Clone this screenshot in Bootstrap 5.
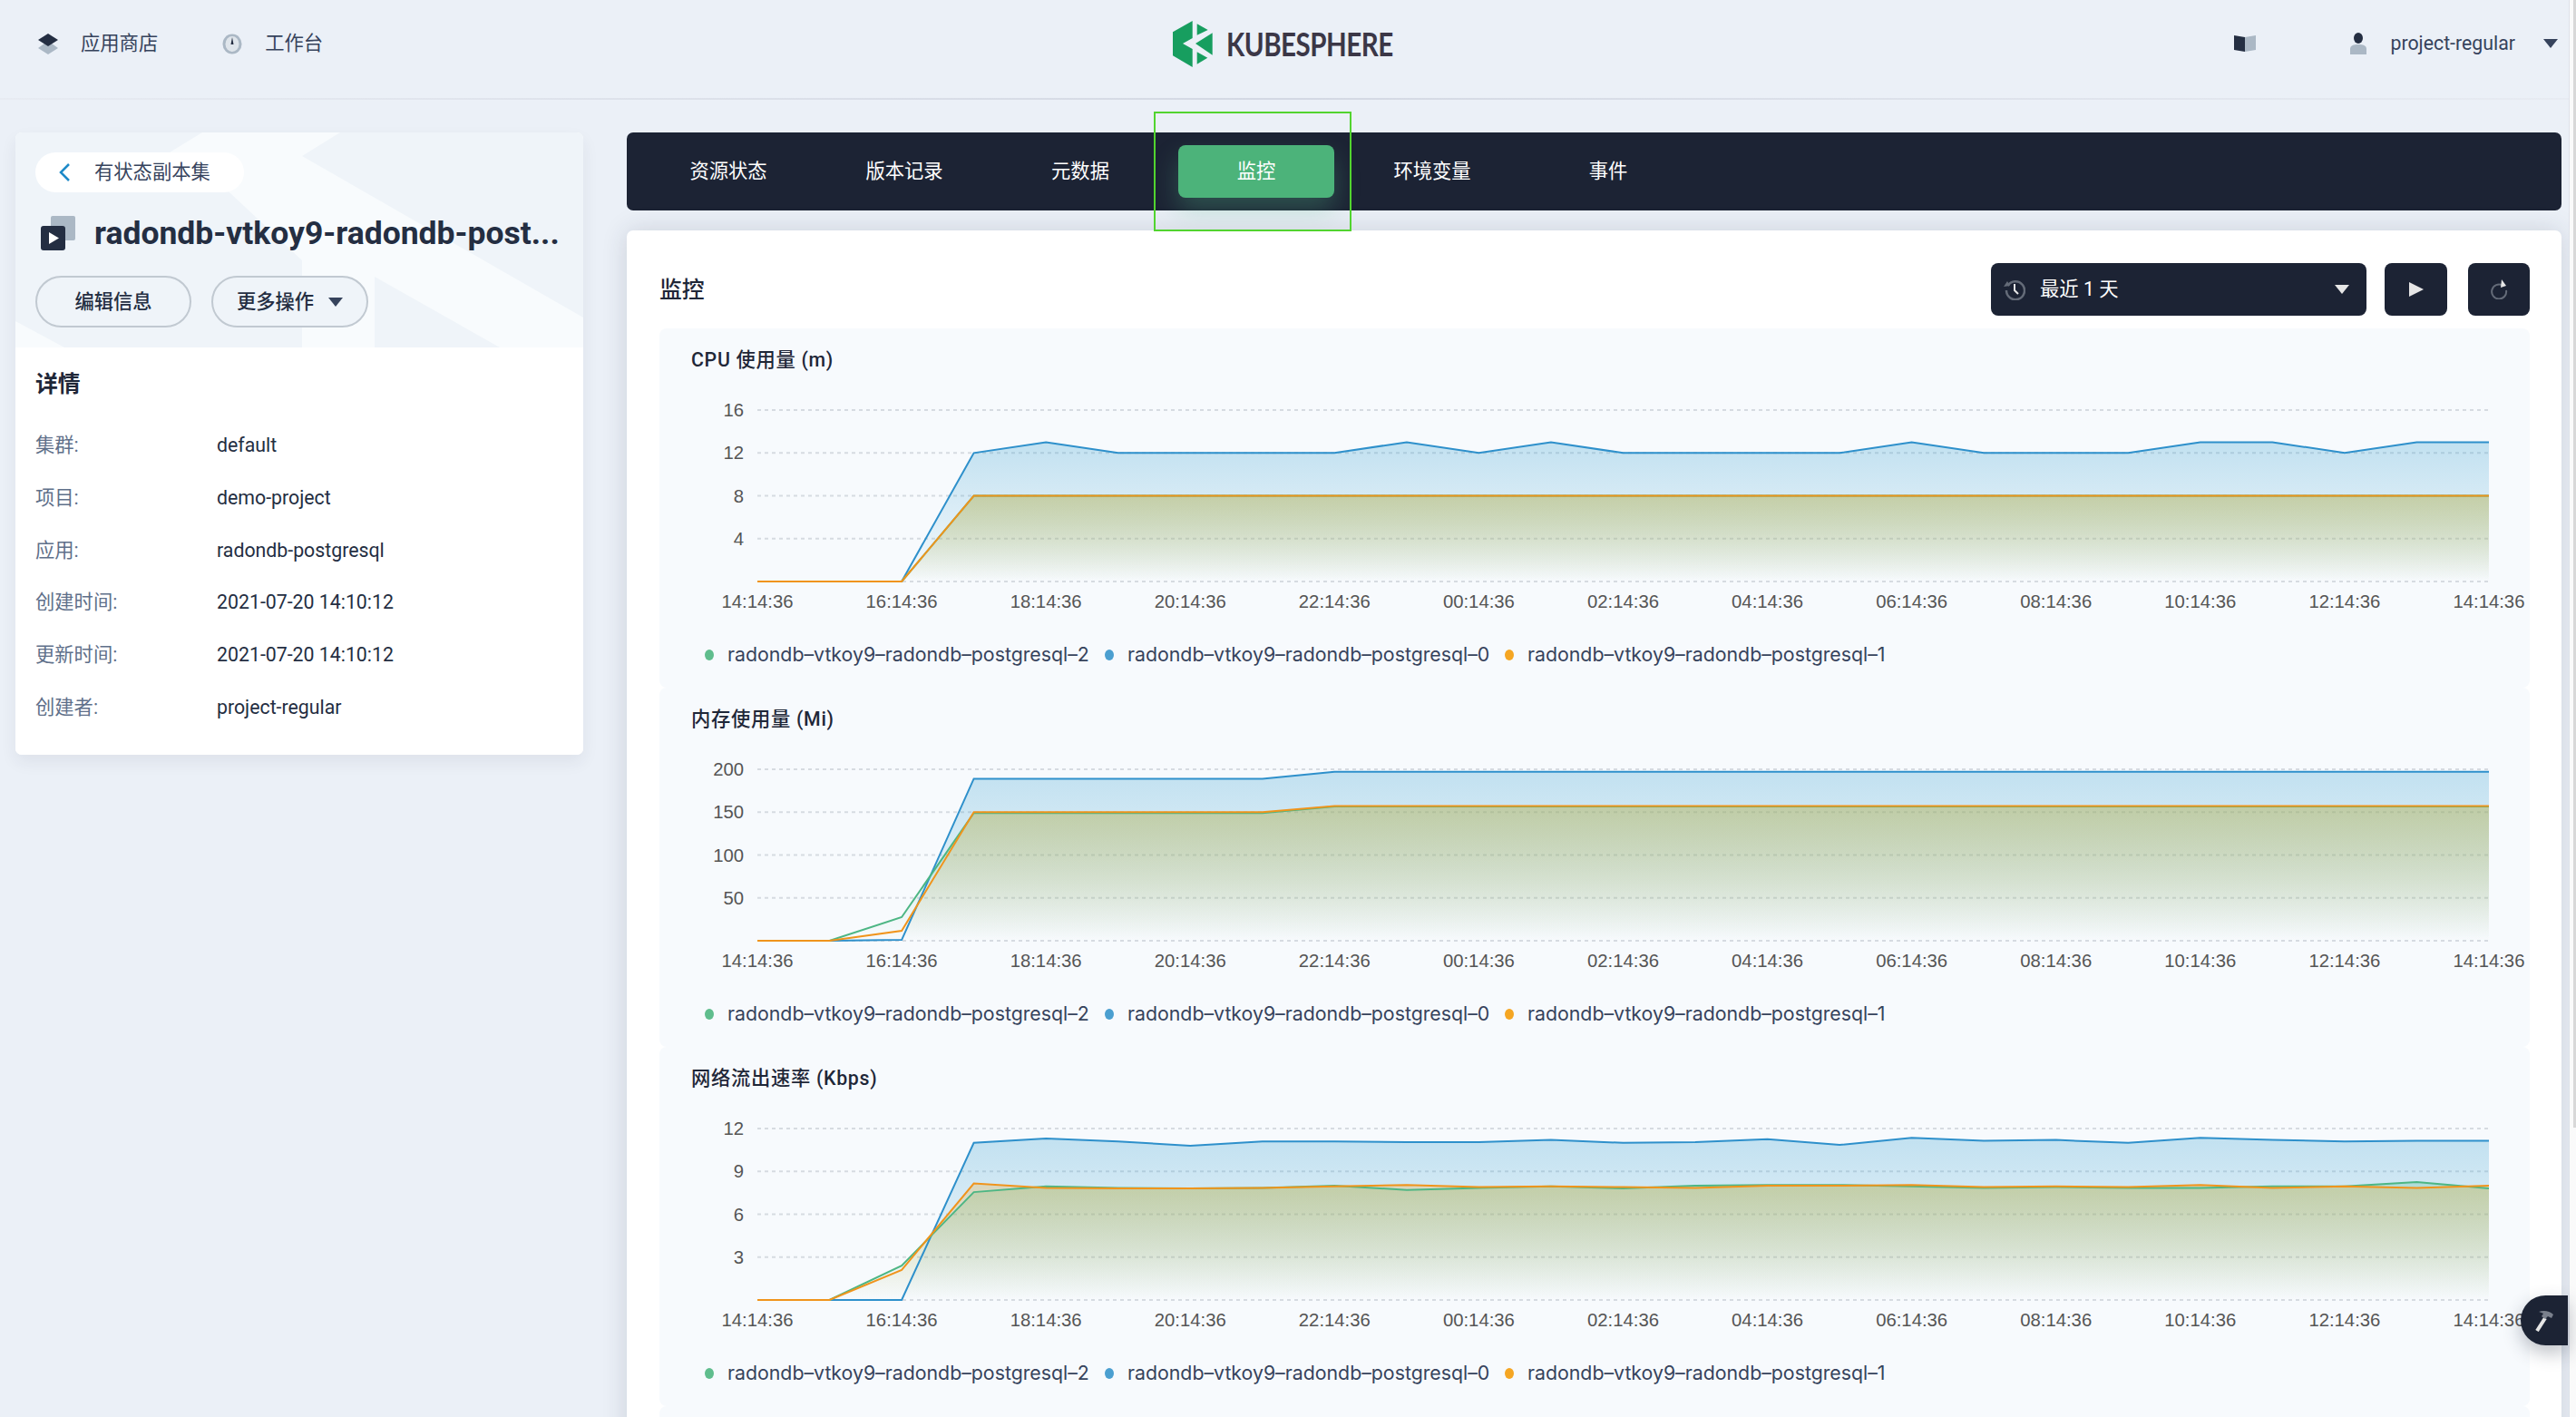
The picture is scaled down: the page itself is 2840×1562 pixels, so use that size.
<!DOCTYPE html>
<html lang="zh">
<head>
    <meta charset="UTF-8">
    <meta name="viewport" content="width=device-width, initial-scale=1.0">
    <title>KubeSphere 监控</title>
    <link href="https://cdn.jsdelivr.net/npm/bootstrap@5.3.0/dist/css/bootstrap.min.css" rel="stylesheet">
    <style>
        html, body { height: 100%; overflow: hidden; }
        body { background: #ebf0f7; color: #242e42; font-family: Roboto, "Noto Sans CJK SC", sans-serif; font-size: 21.3px; }
        .page-wrap { width: 2832px; height: 1562px; overflow: hidden; }
        .gutter { width: 8px; background: #fafafa; border-left: 1px solid #dde1e9; }
        .gutter-thumb { width: 3px; height: 1243px; background: #d8d8d8; }

        .top-bar { height: 108px; padding: 0 12px 12px 42px; display: grid; grid-template-columns: 1fr auto 1fr; align-items: center; }
        .top-rule { height: 2px; background: linear-gradient(to right, #e7ebf2, #d3d8e3 50%, #e7ebf2); }
        .top-item { color: #36435c; gap: 25px; }
        .top-item svg { flex: none; }
        .top-user { margin-left: 27px; }
        .logo-box { gap: 15px; margin-right: 34px; }
        .logo-text { font-family: Lato, sans-serif; font-size: 36px; font-weight: 700; color: #3b3747; letter-spacing: -.6px; line-height: 1; width: 183px; white-space: nowrap; transform: scaleX(.82); transform-origin: left center; }
        .caret-dark { width: 0; height: 0; border-left: 8.5px solid transparent; border-right: 8.5px solid transparent; border-top: 10px solid #36435c; }

        .side-col { width: 626px; margin-left: 17px; margin-top: 36px; flex: none; align-self: flex-start; }
        .side-card { border: 0; border-radius: 7px; overflow: hidden; box-shadow: 0 8px 18px rgba(36,46,66,.07); }
        .side-head { position: relative; height: 237px; padding: 22px; background: #eff4f9; }
        .side-deco { position: absolute; left: 0; top: 0; }
        .side-head > div { position: relative; }
        .back-pill { width: 230px; height: 44px; border-radius: 22px; background: #fff; padding-left: 26px; color: #36435c; gap: 26px; }
        .res-title { margin-top: 24px; height: 42px; font-size: 35.5px; font-weight: 700; line-height: 42px; white-space: nowrap; }
        .res-title svg { margin-left: 6px; margin-right: 21px; flex: none; }
        .btn-round { height: 57px; border-radius: 29px; background: #eff4f9; border: 2px solid #c1c9d1; color: #242e42; font-size: 21.3px; font-weight: 500; padding: 0; }
        .btn-edit { width: 172px; }
        .btn-more { width: 173px; gap: 16px; }
        .side-body { padding: 26px 22px 23px; background: #fff; }
        .side-title { font-size: 24.85px; font-weight: 700; line-height: 30px; margin-bottom: 23px; color: #1f2738; }
        .info-row { height: 57.8px; }
        .info-key { width: 200px; color: #5f708a; }

        .main-col { margin: 36px 8px 0 48px; min-width: 0; flex: 1; }
        .tab-strip { height: 86px; background: #1c2334; border-radius: 7px; padding: 14px 26px; gap: 22px; }
        .tab-strip .nav-link { width: 172px; height: 58px; padding: 0; border-radius: 8px; color: #fff; display: flex; align-items: center; justify-content: center; }
        .tab-strip .nav-link.active { background: #4cb37a; color: #fff; box-shadow: 0 14px 28px rgba(85,188,138,.3); }
        .mark-box { position: absolute; left: -27px; top: -37px; width: 218px; height: 132px; border: 2px solid #52d42f; pointer-events: none; }

        .monitor-card { margin-top: 22px; background: #fff; border-radius: 7px; border: 0; padding: 36px 35px 0 36px; box-shadow: 0 0 28px rgba(36,46,66,.16); }
        .monitor-title { font-size: 24.85px; font-weight: 500; color: #1f2738; padding-top: 2px; }
        .dark-btn { background: #1c2334; border: 0; border-radius: 8px; height: 58px; padding: 0; }
        .dark-btn:hover { background: #1c2334; }
        .time-pick { width: 414px; color: #fff; font-size: 21.3px; padding: 0 19px 0 14px; gap: 16px; }
        .caret-light { width: 0; height: 0; border-left: 8px solid transparent; border-right: 8px solid transparent; border-top: 10px solid #e6e6e6; }
        .play-btn { width: 69px; margin-left: 20px; }
        .reload-btn { width: 68px; margin-left: 23px; }

        .chart-panel { height: 396px; margin-top: 0; padding-top: 22px; background: #f7fafd; border-radius: 8px; }
        .chart-stack { margin-top: 14px; }
        .chart-name { padding-left: 35px; line-height: 26px; height: 26px; font-weight: 500; color: #1f2738; letter-spacing: .7px; }
        .chart-svg { display: block; margin-top: 10px; overflow: visible; }
        .tick { font-family: "Liberation Sans", sans-serif; font-size: 20.3px; fill: #555; }
        .legend-row { margin-top: 19px; padding-left: 50px; height: 26px; font-family: Inter, sans-serif; font-size: 21.3px; color: #36435c; }
        .legend-dot { width: 10px; height: 12px; border-radius: 50%; margin-right: 15px; flex: none; }
        .legend-name { width: 400px; margin-right: 16px; white-space: nowrap; }

        .tool-tab { position: absolute; left: 2779px; top: 1428px; width: 52px; height: 55px; background: #1c2334; border-radius: 28px 0 0 28px; box-shadow: 0 8px 20px rgba(36,46,66,.3); }
    </style>
</head>
<body class="d-flex">
<div class="page-wrap flex-grow-1">
    <header class="top-bar">
        <div class="d-flex align-items-center">
            <a class="top-item d-flex align-items-center text-decoration-none" href="#">
                <svg width="22" height="23" viewBox="0 0 22 23"><path fill="#abb8c5" d="M11 8 22 16 11 23 0 16z"/><path fill="#242e42" d="M11 0 22 7 11 14 0 7z"/></svg>
                <span>应用商店</span>
            </a>
            <a class="top-item d-flex align-items-center text-decoration-none" style="margin-left:71px" href="#">
                <svg width="22" height="23" viewBox="0 0 22 23"><ellipse cx="11" cy="11.500" rx="10.500" ry="11" fill="#abb8c5"/><ellipse cx="11" cy="11.500" rx="7.500" ry="8.500" fill="#dfe5eb"/><path fill="#242e42" d="M9.500 12 11 4 12.500 12z"/></svg>
                <span>工作台</span>
            </a>
        </div>
        <div class="logo-box d-flex align-items-center">
            <svg width="44" height="51" viewBox="0 0 44 51"><g fill="#179e5f"><path d="M21.700 0 0 12.300V38.300L21.700 51V31L11 25 21.700 19z"/><path d="M26.700 3.300 38.700 10 26.700 15.700z"/><path d="M26.700 34.300 38.300 40.700 26.700 47.700z"/><path d="M43.700 13.300V37.700L25 25z"/></g></svg>
            <span class="logo-text">KUBESPHERE</span>
        </div>
        <div class="d-flex align-items-center justify-content-end">
            <svg width="24" height="18" viewBox="0 0 24 18"><path fill="#242e42" d="M0 0 12 2V18L0 16z"/><path fill="#abb8c5" d="M12 2 24 0V16L12 18z"/></svg>
            <svg style="margin-left:104px" width="18" height="24" viewBox="0 0 18 24"><ellipse cx="9" cy="6" rx="5" ry="6" fill="#242e42"/><path fill="#abb8c5" d="M0 24V18C0 14 4 13 9 13S18 14 18 18V24z"/></svg>
            <span class="top-item top-user">project-regular</span>
            <span class="caret-dark" style="margin-left:31px"></span>
        </div>
    </header>
    <div class="top-rule"></div>

    <div class="d-flex">
        <aside class="side-col">
            <div class="card side-card">
                <div class="side-head">
                    <svg class="side-deco" width="626" height="237" viewBox="0 0 626 237"><g fill="#f8fbfd"><path d="M206 0H358L316 26 626 204V237H534L396 159V237H316V141L237 67 170 22z"/><path d="M0 208 54 237H0z"/></g></svg>
                    <div class="back-pill d-flex align-items-center">
                        <svg width="13" height="20" viewBox="0 0 13 20"><path d="M11 1 2 10 11 19" fill="none" stroke="#1e8ac8" stroke-width="2.500"/></svg>
                        <span>有状态副本集</span>
                    </div>
                    <div class="res-title d-flex align-items-center">
                        <svg width="38" height="38" viewBox="0 0 38 38"><rect x="11" y="0" width="27" height="27" rx="2" fill="#abb8c5"/><rect x="0" y="11" width="27" height="27" rx="3" fill="#242e42"/><path fill="#fff" d="M9 18 20 24.500 9 31z"/></svg>
                        <span>radondb-vtkoy9-radondb-post...</span>
                    </div>
                    <div class="d-flex" style="margin-top:26px;gap:22px">
                        <button type="button" class="btn btn-round btn-edit">编辑信息</button>
                        <button type="button" class="btn btn-round btn-more d-flex align-items-center justify-content-center">更多操作<span class="caret-dark"></span></button>
                    </div>
                </div>
                <div class="side-body">
                    <div class="side-title">详情</div>
                    <div class="info-row d-flex align-items-center"><span class="info-key">集群:</span><span>default</span></div>
                    <div class="info-row d-flex align-items-center"><span class="info-key">项目:</span><span>demo-project</span></div>
                    <div class="info-row d-flex align-items-center"><span class="info-key">应用:</span><span>radondb-postgresql</span></div>
                    <div class="info-row d-flex align-items-center"><span class="info-key">创建时间:</span><span>2021-07-20 14:10:12</span></div>
                    <div class="info-row d-flex align-items-center"><span class="info-key">更新时间:</span><span>2021-07-20 14:10:12</span></div>
                    <div class="info-row d-flex align-items-center"><span class="info-key">创建者:</span><span>project-regular</span></div>
                </div>
            </div>
        </aside>

        <main class="main-col">
            <ul class="nav tab-strip">
                <li class="nav-item"><a class="nav-link" href="#">资源状态</a></li>
                <li class="nav-item"><a class="nav-link" href="#">版本记录</a></li>
                <li class="nav-item"><a class="nav-link" href="#">元数据</a></li>
                <li class="nav-item position-relative"><a class="nav-link active" href="#">监控</a><div class="mark-box"></div></li>
                <li class="nav-item"><a class="nav-link" href="#">环境变量</a></li>
                <li class="nav-item"><a class="nav-link" href="#">事件</a></li>
            </ul>

            <section class="monitor-card">
                <div class="d-flex align-items-center">
                    <div class="monitor-title me-auto">监控</div>
                    <button type="button" class="btn dark-btn time-pick d-flex align-items-center">
                        <svg width="24" height="24" viewBox="0 0 24 24"><path d="M4.500 8A10 10 0 1 1 3 13" fill="none" stroke="#646b78" stroke-width="2.500"/><path fill="#646b78" d="M0 9 7 8 4 3z"/><path d="M12 6V13L16 17" fill="none" stroke="#e6e6e6" stroke-width="2"/></svg>
                        <span>最近 1 天</span>
                        <span class="caret-light ms-auto"></span>
                    </button>
                    <button type="button" class="btn dark-btn play-btn d-flex align-items-center justify-content-center">
                        <svg width="16" height="16" viewBox="0 0 16 16"><path fill="#e6e6e6" d="M0 0 16 8 0 16z"/></svg>
                    </button>
                    <button type="button" class="btn dark-btn reload-btn d-flex align-items-center justify-content-center">
                        <svg width="20" height="22" viewBox="0 0 20 22"><path d="M14 6.500A8 8 0 1 0 18 12" fill="none" stroke="#646b78" stroke-width="2"/><path fill="#e6e6e6" d="M12 9 13 0 18 7z"/></svg>
                    </button>
                </div>
                <div class="chart-stack" id="charts"></div>
            </section>
        </main>
    </div>
</div>
<div class="gutter"><div class="gutter-thumb ms-auto"></div></div>

<div class="tool-tab d-flex align-items-center justify-content-center">
    <svg width="22" height="24" viewBox="0 0 22 24"><path d="M12 9 3 23" stroke="#e6e6e6" stroke-width="4"/><path fill="#7a808c" d="M5 2C10 0 17 1 21 5L19 9 15 7 12 10 8 7 10 4C9 3 7 3 5 2z"/></svg>
</div>

<script>
    var names = ['radondb–vtkoy9–radondb–postgresql–2', 'radondb–vtkoy9–radondb–postgresql–0', 'radondb–vtkoy9–radondb–postgresql–1'];
    var colors = { green: '#4db684', blue: '#2e90cb', orange: '#f0941c' };
    var dots = ['#5fbd8d', '#4b9fd0', '#f5a623'];
    var times = ['14:14:36', '16:14:36', '18:14:36', '20:14:36', '22:14:36', '00:14:36', '02:14:36', '04:14:36', '06:14:36', '08:14:36', '10:14:36', '12:14:36', '14:14:36'];

    function rep(n, v) { return Array(n).fill(v); }

    var charts = [
        {
            title: 'CPU 使用量 (m)', ticks: [4, 8, 12, 16],
            blue: [0, 0, 0, 12, 13, 12, 12, 12, 12, 13, 12, 13, 12, 12, 12, 12, 13, 12, 12, 12, 13, 13, 12, 13, 13],
            green: [0, 0, 0].concat(rep(22, 8)),
            orange: [0, 0, 0].concat(rep(22, 8))
        },
        {
            title: '内存使用量 (Mi)', ticks: [50, 100, 150, 200],
            blue: [0, 0, 1].concat(rep(5, 189), rep(17, 197)),
            green: [0, 0, 27.5].concat(rep(5, 149), rep(17, 156.5)),
            orange: [0, 0, 11.5].concat(rep(5, 150), rep(17, 157))
        },
        {
            title: '网络流出速率 (Kbps)', ticks: [3, 6, 9, 12],
            blue: [0, 0, 0, 11, 11.3, 11.1, 10.8, 11.1, 11.1, 11.05, 11.05, 11.2, 11, 11.05, 11.25, 10.85, 11.35, 11.15, 11.2, 11, 11.35, 11.2, 11.1, 11.15, 11.15],
            green: [0, 0, 2.4, 7.55, 7.95, 7.85, 7.8, 7.85, 8, 7.7, 7.85, 7.95, 7.8, 8, 8.05, 8.05, 7.95, 7.85, 7.9, 7.85, 7.85, 7.95, 7.95, 8.25, 7.8],
            orange: [0, 0, 2.1, 8.15, 7.85, 7.8, 7.8, 7.85, 7.95, 8.05, 7.9, 7.95, 7.9, 7.85, 8, 8, 8.05, 7.9, 7.95, 7.9, 8.05, 7.85, 7.95, 7.85, 8]
        }
    ];

    var X0 = 108, STEP = 79.54, Y0 = 221, SPAN = 189;

    function buildChart(c, idx) {
        var top = c.ticks[c.ticks.length - 1];
        function yOf(v) { return Y0 - v / top * SPAN; }
        var svg = '<defs>';
        ['blue', 'green', 'orange'].forEach(function (k) {
            var base = k === 'blue' ? '#329dce' : k === 'green' ? '#55bc8a' : '#f5a623';
            svg += '<linearGradient id="g' + idx + k + '" x1="0" y1="0" x2="0" y2="1">' +
                '<stop offset="0" stop-color="' + base + '" stop-opacity=".27"/>' +
                '<stop offset=".55" stop-color="' + base + '" stop-opacity=".13"/>' +
                '<stop offset="1" stop-color="' + base + '" stop-opacity="0"/></linearGradient>';
        });
        svg += '</defs>';

        // grid and axis labels
        [0].concat(c.ticks).forEach(function (t) {
            var y = yOf(t);
            svg += '<line x1="' + X0 + '" x2="' + (X0 + STEP * 24) + '" y1="' + y + '" y2="' + y + '" stroke="#d6dbe1" stroke-width="2" stroke-dasharray="4 4"/>';
            if (t) svg += '<text class="tick" x="93" y="' + (y + 7) + '" text-anchor="end">' + t + '</text>';
        });
        times.forEach(function (t, i) {
            svg += '<text class="tick" x="' + (X0 + STEP * 2 * i) + '" y="250" text-anchor="middle">' + t + '</text>';
        });

        // areas first, then the lines on top
        ['blue', 'green', 'orange'].forEach(function (k) {
            var pts = c[k].map(function (v, i) { return (X0 + STEP * i).toFixed(1) + ',' + yOf(v).toFixed(1); });
            svg += '<polygon fill="url(#g' + idx + k + ')" points="' + X0 + ',' + Y0 + ' ' + pts.join(' ') + ' ' + (X0 + STEP * 24) + ',' + Y0 + '"/>';
        });
        ['blue', 'green', 'orange'].forEach(function (k) {
            var pts = c[k].map(function (v, i) { return (X0 + STEP * i).toFixed(1) + ',' + yOf(v).toFixed(1); });
            svg += '<polyline fill="none" stroke="' + colors[k] + '" stroke-width="2" points="' + pts.join(' ') + '"/>';
        });

        var legend = names.map(function (n, i) {
            return '<span class="legend-dot" style="background:' + dots[i] + '"></span><span class="legend-name">' + n + '</span>';
        }).join('');

        return '<div class="chart-panel">' +
            '<div class="chart-name">' + c.title + '</div>' +
            '<svg class="chart-svg" width="2062" height="270" viewBox="0 0 2062 270">' + svg + '</svg>' +
            '<div class="legend-row d-flex align-items-center">' + legend + '</div>' +
            '</div>';
    }

    document.getElementById('charts').innerHTML = charts.map(buildChart).join('') + '<div class="chart-panel"></div>';
</script>
<script src="https://cdn.jsdelivr.net/npm/bootstrap@5.3.0/dist/js/bootstrap.bundle.min.js"></script>
</body>
</html>
